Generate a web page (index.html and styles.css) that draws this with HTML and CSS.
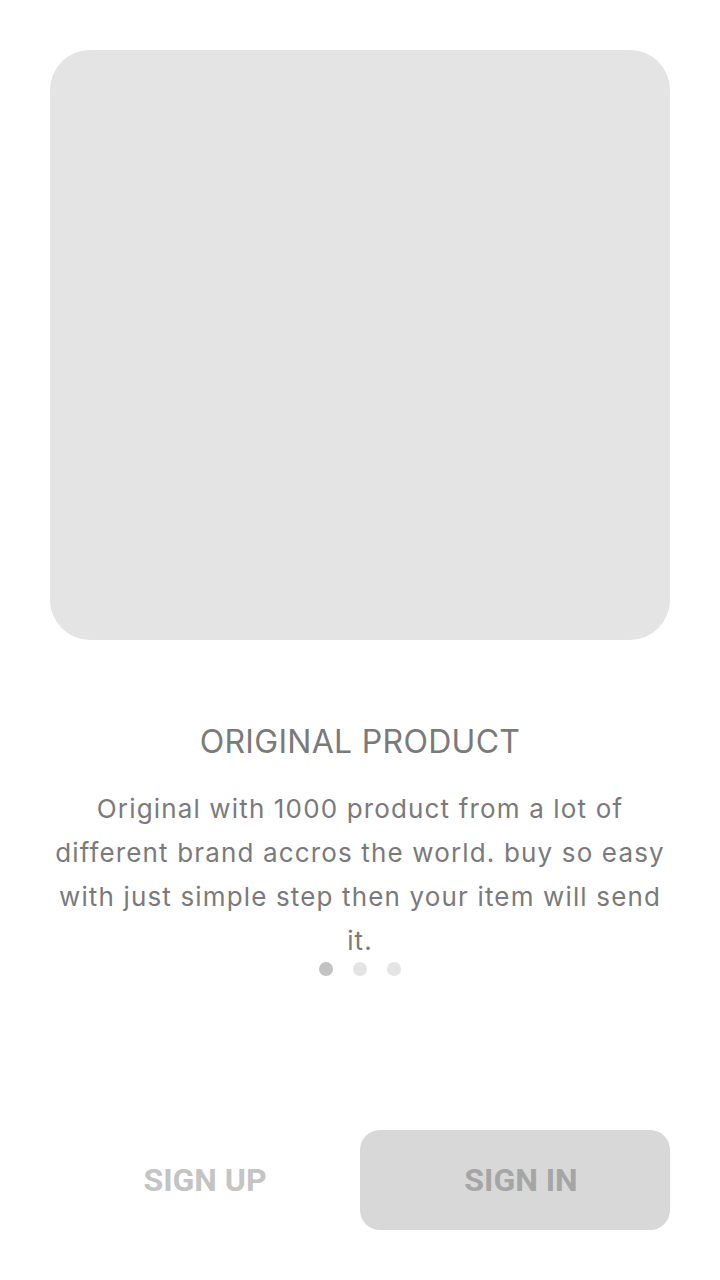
FILE: index.html
```html
<!DOCTYPE html>
<html>
<head>
<meta charset="utf-8">
<link rel="stylesheet" href="styles.css">
</head>
<body>
<div class="screen">
  <div class="hero"></div>
  <div class="content">
    <h1 class="title">ORIGINAL PRODUCT</h1>
    <p class="desc">Original with 1000 product from a lot of different brand accros the world. buy so easy with just simple step then your item will send it.</p>
    <div class="dots">
      <span class="dot active"></span>
      <span class="dot"></span>
      <span class="dot"></span>
    </div>
  </div>
  <div class="actions">
    <button class="btn btn-text">SIGN UP</button>
    <button class="btn btn-fill">SIGN IN</button>
  </div>
</div>
</body>
</html>
```
FILE: styles.css
```css
* { box-sizing: border-box; }
html, body { margin: 0; padding: 0; background: #fff; }
.screen {
  width: 720px;
  height: 1280px;
  padding: 50px 50px 50px;
  display: flex;
  flex-direction: column;
}
.hero {
  width: 620px;
  height: 590px;
  border-radius: 40px;
  background: #e4e4e4;
  flex: none;
}
.content {
  display: flex;
  flex-direction: column;
  align-items: center;
  padding-top: 82px;
}
.title {
  margin: 0;
  font-family: Inter, "Noto Sans", sans-serif;
  font-weight: 400;
  font-size: 32px;
  line-height: 40px;
  color: #7a7a7a;
  letter-spacing: 0.3px;
}
.desc {
  margin: 25px 0 0;
  font-family: Inter, "Noto Sans", sans-serif;
  font-size: 26px;
  line-height: 44px;
  color: #7a7a7a;
  text-align: center;
  letter-spacing: 1.15px;
}
.dots {
  display: flex;
  gap: 20px;
  margin-top: -1px;
}
.dot {
  width: 14px;
  height: 14px;
  border-radius: 50%;
  background: #e4e4e4;
}
.dot.active { background: #c2c2c2; }
.actions {
  margin-top: auto;
  display: grid;
  grid-template-columns: 1fr 1fr;
}
.btn {
  min-width: 0;
  height: 100px;
  border: none;
  border-radius: 20px;
  font-family: Roboto, "Noto Sans", sans-serif;
  font-weight: 700;
  font-size: 32px;
  padding: 0;
}
.btn-text { background: transparent; color: #c4c4c4; }
.btn-fill { background: #d8d8d8; color: #a5a5a5; padding-left: 12px; }
```
